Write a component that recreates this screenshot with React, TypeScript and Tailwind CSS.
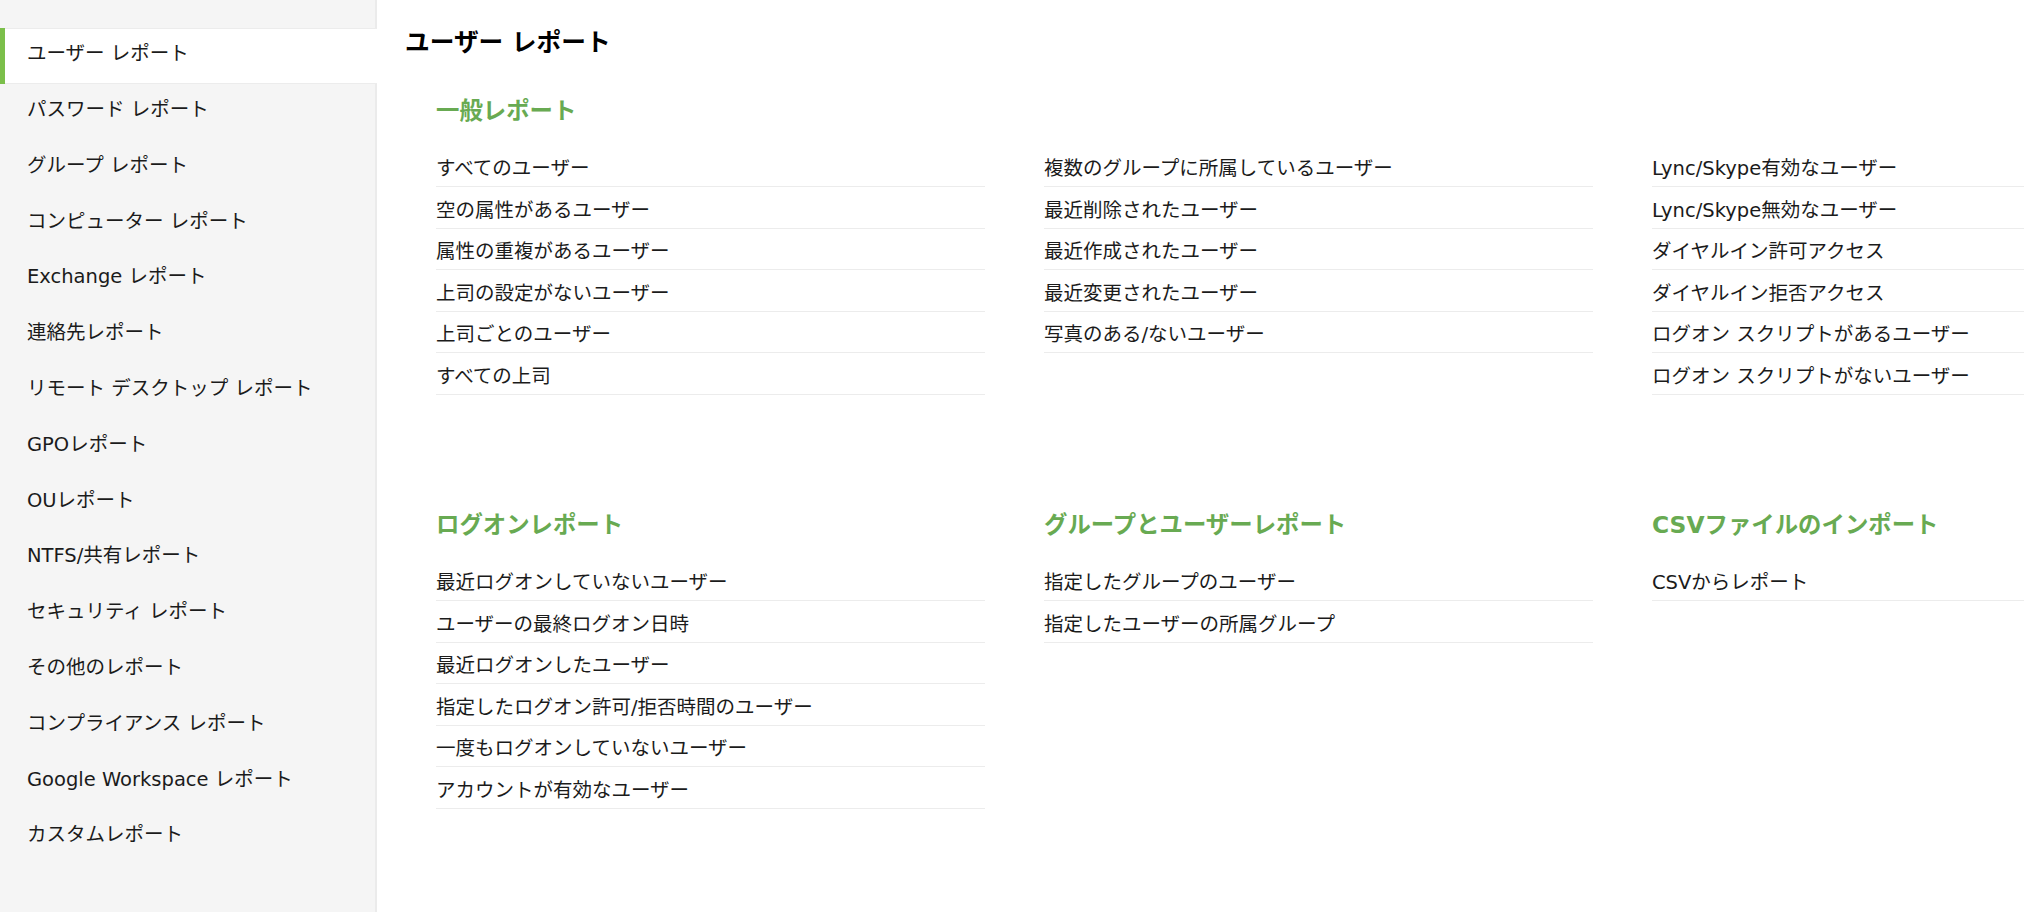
import { clsx } from 'clsx';

const navItems = [
    'ユーザー レポート',
    'パスワード レポート',
    'グループ レポート',
    'コンピューター レポート',
    'Exchange レポート',
    '連絡先レポート',
    'リモート デスクトップ レポート',
    'GPOレポート',
    'OUレポート',
    'NTFS/共有レポート',
    'セキュリティ レポート',
    'その他のレポート',
    'コンプライアンス レポート',
    'Google Workspace レポート',
    'カスタムレポート',
];

const sections = [
    {
        title: '一般レポート',
        items: ['すべてのユーザー', '空の属性があるユーザー', '属性の重複があるユーザー', '上司の設定がないユーザー', '上司ごとのユーザー', 'すべての上司'],
    },
    {
        title: '',
        items: ['複数のグループに所属しているユーザー', '最近削除されたユーザー', '最近作成されたユーザー', '最近変更されたユーザー', '写真のある/ないユーザー'],
    },
    {
        title: '',
        items: ['Lync/Skype有効なユーザー', 'Lync/Skype無効なユーザー', 'ダイヤルイン許可アクセス', 'ダイヤルイン拒否アクセス', 'ログオン スクリプトがあるユーザー', 'ログオン スクリプトがないユーザー'],
    },
    {
        title: 'ログオンレポート',
        items: ['最近ログオンしていないユーザー', 'ユーザーの最終ログオン日時', '最近ログオンしたユーザー', '指定したログオン許可/拒否時間のユーザー', '一度もログオンしていないユーザー', 'アカウントが有効なユーザー'],
    },
    {
        title: 'グループとユーザーレポート',
        items: ['指定したグループのユーザー', '指定したユーザーの所属グループ'],
    },
    {
        title: 'CSVファイルのインポート',
        items: ['CSVからレポート'],
    },
];

export default function App() {
    return (
        <div className="flex w-screen h-[912px] overflow-hidden bg-white text-[#1b1b1b] font-['DejaVu_Sans','Noto_Sans_CJK_JP',sans-serif]">
            {/* Sidebar */}
            <aside className="w-[377px] shrink-0 h-full bg-[#f5f5f5] border-r-2 border-[#ebebeb] pt-[28px]">
                {navItems.map((label, i) => (
                    <div
                        key={label}
                        className={clsx(
                            'relative h-[55.8px] flex items-center pl-[27px] pb-[4px] text-[19.5px] cursor-pointer',
                            i === 0 && 'bg-white border-y border-[#ececec] -mr-[2px]'
                        )}
                    >
                        {i === 0 && <span className="absolute left-0 -top-px -bottom-px w-[5px] bg-[#7bbf4a]" />}
                        {label}
                    </div>
                ))}
            </aside>

            {/* Main */}
            <main className="flex-1 min-w-0 pl-[28px] pt-[28px]">
                <h2 className="text-[24.7px] font-bold leading-[30px] text-black">ユーザー レポート</h2>
                <div className="mt-[38px] pl-[31px] grid grid-cols-[549px_549px_549px] gap-x-[59px] gap-y-[115px]">
                    {sections.map((s, i) => (
                        <section key={i}>
                            <h3 className="h-[30px] leading-[30px] text-[23.4px] font-bold text-[#68aa52] mb-[19.4px]">{s.title}</h3>
                            {s.items.map(item => (
                                <div
                                    key={item}
                                    className="h-[41.6px] flex items-center pt-[6px] border-b border-[#ececec] text-[19.5px] whitespace-nowrap cursor-pointer"
                                >
                                    {item}
                                </div>
                            ))}
                        </section>
                    ))}
                </div>
            </main>
        </div>
    );
}
